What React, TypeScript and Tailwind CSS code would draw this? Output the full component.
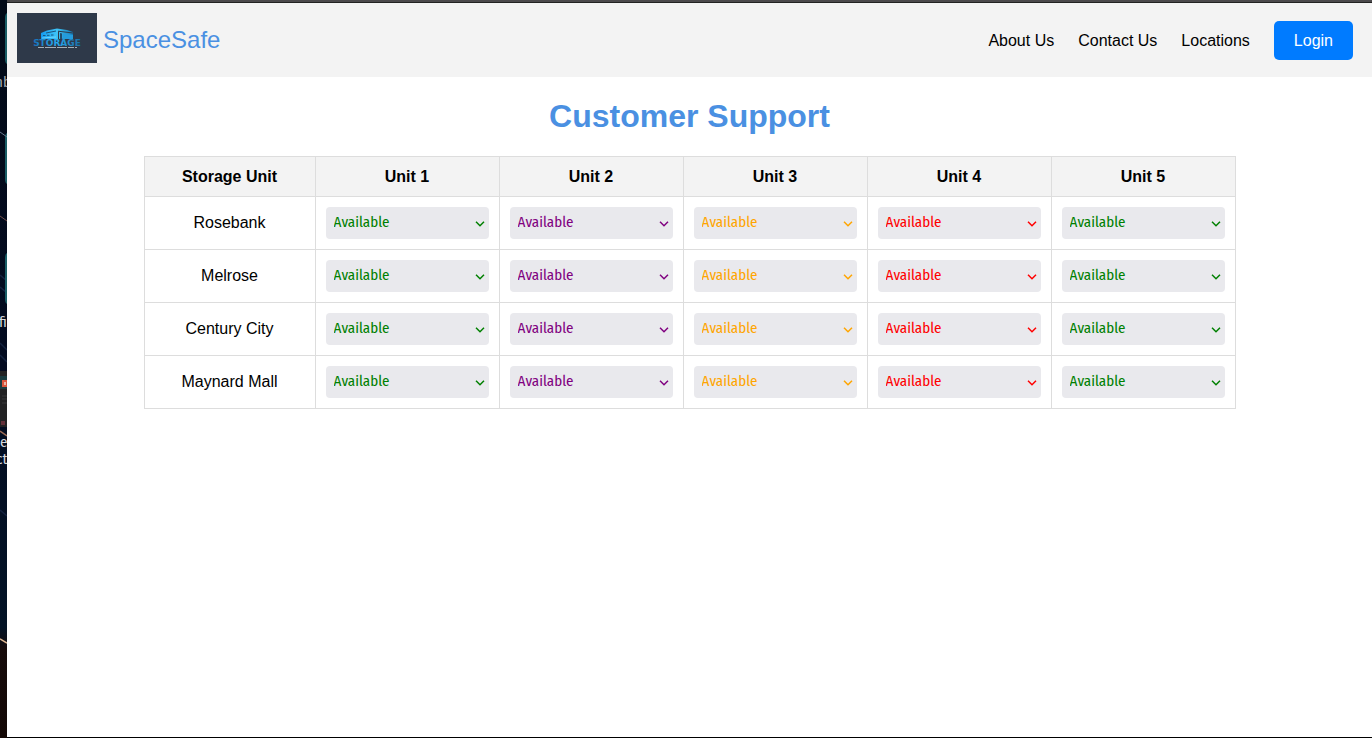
import { useState } from "react";

const units = [
  { name: "Unit 1", color: "text-[#008000]" },
  { name: "Unit 2", color: "text-[#800080]" },
  { name: "Unit 3", color: "text-[#ffa500]" },
  { name: "Unit 4", color: "text-[#ff0000]" },
  { name: "Unit 5", color: "text-[#008000]" },
];

const locations = ["Rosebank", "Melrose", "Century City", "Maynard Mall"];

const links = ["About Us", "Contact Us", "Locations"];

function Logo() {
  return (
    <svg viewBox="0 0 80 50" className="h-[50px] w-20 shrink-0" role="img" aria-label="Storage">
      <defs>
        <linearGradient id="roof" x1="0" x2="1" y1="0" y2="0">
          <stop offset="0" stopColor="#139bf0" />
          <stop offset="0.5" stopColor="#3fc4f7" />
          <stop offset="1" stopColor="#1579b5" />
        </linearGradient>
        <linearGradient id="word" x1="0" x2="1" y1="0" y2="0">
          <stop offset="0" stopColor="#1770b8" />
          <stop offset="0.5" stopColor="#25a9ef" />
          <stop offset="1" stopColor="#1b6fa5" />
        </linearGradient>
      </defs>
      <rect width="80" height="50" fill="#2e3949" />
      <path d="M30 17.500 40 15.500 50 17 56 19V25L41 26 24 26V20Z" fill="url(#roof)" />
      <path d="M41 18.200 56 20M41.500 26V18.500" stroke="#2e3949" strokeWidth="1" fill="none" />
      <path d="M43 20 45 20.500V26H43Z" fill="#214c6c" />
      <path d="M45.500 20.500 56 22V26H45.500Z" fill="#249bdc" />
      <path d="M26 22.500h2.500M30 22.300h2.500M34 22h2.500M29 20 39 18" stroke="#1b557d" strokeWidth="1" />
      <path d="M25 25 39 24" stroke="#78dcfc" strokeWidth="0.800" />
      <text x="40" y="33" textAnchor="middle" fontFamily="DejaVu Sans, sans-serif" fontSize="9" fontWeight="bold" fill="url(#word)">
        STORAGE
      </text>
      <path d="M21 34.500H60" stroke="#a5afb8" strokeWidth="1" strokeDasharray="6 1 11 1 10 1" />
    </svg>
  );
}

function Wallpaper() {
  return (
    <div className="relative w-[7px] shrink-0 overflow-hidden bg-[#020a18]" aria-hidden="true">
      <svg viewBox="0 0 7 738" preserveAspectRatio="none" className="absolute inset-0 h-full w-full">
        <defs>
          <linearGradient id="sky" x1="0" x2="0" y1="0" y2="1">
            <stop offset="0" stopColor="#020a17" />
            <stop offset="0.500" stopColor="#030b20" />
            <stop offset="0.850" stopColor="#031326" />
            <stop offset="0.880" stopColor="#160b0b" />
            <stop offset="1" stopColor="#130805" />
          </linearGradient>
        </defs>
        <rect width="7" height="738" fill="url(#sky)" />
        <path d="M0 275 7 281M0 287 7 293M0 343 7 350M0 355 7 362M0 510 7 516" stroke="#14223f" strokeWidth="1.500" />
        <path d="M7 13Q5 14 5 18V59Q5 63 7 64ZM7 133Q5 134 5 138V179Q5 183 7 184ZM7 253Q5 254 5 258V299Q5 303 7 304Z" fill="#195d66" />
        <path d="M0 132 7 137" stroke="#687a91" strokeWidth="1" />
        <path d="M0 216 7 221" stroke="#73504b" strokeWidth="1" />
        <rect y="371" width="7" height="56" fill="#222224" />
        <rect y="376" width="7" height="13" fill="#193b40" />
        <rect x="2" y="380" width="5" height="7" fill="#d8573f" />
        <rect x="4" y="382" width="2" height="3" fill="#e8b8a8" />
        <path d="M2 396h5M2 399h5M2 403h5" stroke="#39393b" strokeWidth="1" />
        <rect x="1" y="421" width="4" height="4" fill="#63303a" />
        <path d="M0 431 7 436" stroke="#9b6c57" strokeWidth="1.500" />
        <path d="M0 639 7 643" stroke="#e0b994" strokeWidth="1.500" />
      </svg>
      <div className="absolute top-[74px] left-[-5px] font-['Fira_Sans_Condensed','Noto_Sans',sans-serif] text-[15px] leading-4 text-[#a4a8ad]">nb</div>
      <div className="absolute top-[314px] left-[-1px] font-['Fira_Sans_Condensed','Noto_Sans',sans-serif] text-[15px] leading-4 text-[#d5d8dc]">fi.</div>
      <div className="absolute top-[434px] left-0 font-['Fira_Sans_Condensed','Noto_Sans',sans-serif] text-[15px] leading-4 text-[#d5d8dc]">e</div>
      <div className="absolute top-[451px] left-[-4px] font-['Fira_Sans_Condensed','Noto_Sans',sans-serif] text-[15px] leading-4 text-[#d5d8dc]">ct</div>
    </div>
  );
}

function StatusSelect({ label, color }: { label: string; color: string }) {
  const [status, setStatus] = useState("Available");
  return (
    <div className={`relative ${color}`}>
      <select
        aria-label={label}
        value={status}
        onChange={(event) => setStatus(event.target.value)}
        className="block h-8 w-full appearance-none rounded bg-[#e9e9ed] pr-6 pb-0.5 pl-2 font-['Fira_Sans_Condensed',Roboto,sans-serif] text-[15px]"
      >
        <option>Available</option>
        <option>Occupied</option>
      </select>
      <svg viewBox="0 0 10 6" className="pointer-events-none absolute top-[14px] right-1 h-[6px] w-[10px]" fill="none" stroke="currentColor" strokeWidth="1.500">
        <path d="M1 0.700 5 4.700 9 0.700" />
      </svg>
    </div>
  );
}

export default function App() {
  return (
    <div className="flex min-h-screen bg-white font-['Liberation_Sans',Arial,sans-serif] text-base text-black">
      <Wallpaper />
      <div className="flex min-w-0 flex-1 flex-col border-b border-black">
        <div className="h-[3px] border-b border-[#222222] bg-[#4b494b]" />
        <header className="flex h-[74px] items-center justify-between bg-[#f3f3f3] pr-[19px] pl-[10px]">
          <a href="#home" className="flex items-center gap-[6px] pb-1 text-2xl text-[#4a90e2]">
            <Logo />
            <span className="pt-1">SpaceSafe</span>
          </a>
          <nav className="flex items-center gap-6">
            {links.map((link) => (
              <a key={link} href="#section" className="pt-0.5 whitespace-nowrap">
                {link}
              </a>
            ))}
            <button className="h-[39px] rounded-[5px] bg-[#007bff] px-5 pt-0.5 text-white">Login</button>
          </nav>
        </header>
        <main className="flex flex-col items-center">
          <h1 className="mt-[19px] mb-5 text-[32px] leading-10 font-bold text-[#4a90e2]">Customer Support</h1>
          <table className="w-4/5 table-fixed border-collapse text-center">
            <thead>
              <tr className="h-10 bg-[#f3f3f3]">
                <th className="w-[171px] border border-[#dddddd]">Storage Unit</th>
                {units.map((unit) => (
                  <th key={unit.name} className="border border-[#dddddd]">
                    {unit.name}
                  </th>
                ))}
              </tr>
            </thead>
            <tbody>
              {locations.map((location) => (
                <tr key={location}>
                  <td className="border border-[#dddddd]">{location}</td>
                  {units.map((unit) => (
                    <td key={unit.name} className="border border-[#dddddd] p-[10px]">
                      <StatusSelect label={`${location} ${unit.name}`} color={unit.color} />
                    </td>
                  ))}
                </tr>
              ))}
            </tbody>
          </table>
        </main>
      </div>
    </div>
  );
}
